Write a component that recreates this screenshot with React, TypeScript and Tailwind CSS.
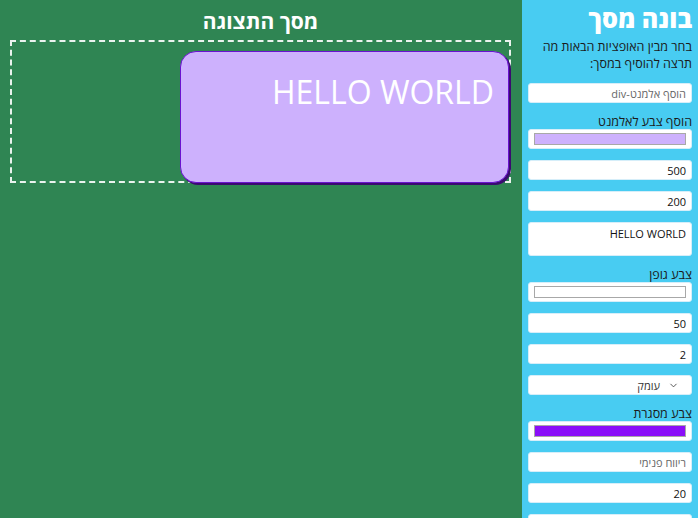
import { ChevronDown } from "lucide-react";

const font = { fontFamily: '"Open Sans", "Liberation Sans", "DejaVu Sans", sans-serif' };

function Field({ value, placeholder }: { value?: string; placeholder?: string }) {
  return (
    <div className="mb-[11px] h-[20px] rounded-[3px] border border-[#d6eef9] bg-white px-[5px] flex items-center text-[11px] leading-none">
      {value ? <span className="text-[#111]">{value}</span> : <span className="text-[#666]">{placeholder}</span>}
    </div>
  );
}

function ColorField({ color }: { color: string }) {
  return (
    <div className="mb-[11px] h-[20px] rounded-[3px] border border-[#d6eef9] bg-white px-[5px] py-[3px] flex">
      <div className="flex-1 border-[1.5px] border-[#a8a8a8]" style={{ backgroundColor: color }} />
    </div>
  );
}

function Label({ children }: { children: string }) {
  return <div className="h-[15px] text-[12.5px] leading-[15px] text-[#1a1a1a]">{children}</div>;
}

export default function App() {
  return (
    <div dir="rtl" className="w-[698px] h-[518px] overflow-hidden flex bg-[#2f8553]" style={font}>
      <aside className="w-[176px] h-full bg-[#48ccf2] px-[6px] pt-[3px] shrink-0">
        <h1 className="text-[25px] leading-[30px] font-extrabold text-white">בונה מסך</h1>
        <p className="mt-[5px] mb-[11px] text-[12.5px] leading-[17px] text-[#1a1a1a]">
          בחר מבין האופציות הבאות מה תרצה להוסיף במסך:
        </p>
        <Field placeholder="הוסף אלמנט-div" />
        <Label>הוסף צבע לאלמנט</Label>
        <ColorField color="#cdb1fd" />
        <Field value="500" />
        <Field value="200" />
        <div className="mb-[11px] h-[34px] rounded-[3px] border border-[#d6eef9] bg-white px-[5px] pt-[5px] text-[11px] leading-none text-[#111]">
          HELLO WORLD
        </div>
        <Label>צבע גופן</Label>
        <ColorField color="#ffffff" />
        <Field value="50" />
        <Field value="2" />
        <div className="mb-[11px] h-[20px] rounded-[3px] border border-[#d6eef9] bg-white pr-[12px] flex items-center gap-[8px] text-[11px] leading-none text-[#333]">
          <ChevronDown size={11} strokeWidth={1.75} />
          <span>עומק</span>
        </div>
        <Label>צבע מסגרת</Label>
        <ColorField color="#8a0ff8" />
        <Field placeholder="ריווח פנימי" />
        <Field value="20" />
        <Field value="" placeholder="" />
      </aside>
      <main className="flex-1 pl-[10px] pr-[11px]">
        <h2 className="h-[40px] pt-[7px] text-center text-[21px] leading-[28px] font-bold text-white">מסך התצוגה</h2>
        <div className="h-[143px] border-2 border-dashed border-white/90 pt-[9px]">
          <div className="w-[329px] h-[132px] rounded-[16px] border border-[#6a12d0] bg-[#cdb1fd] shadow-[2px_2px_0_#3a0a70] pt-[20px] pr-[14px] text-[32px] leading-[40px] text-white">
            HELLO WORLD
          </div>
        </div>
      </main>
    </div>
  );
}
